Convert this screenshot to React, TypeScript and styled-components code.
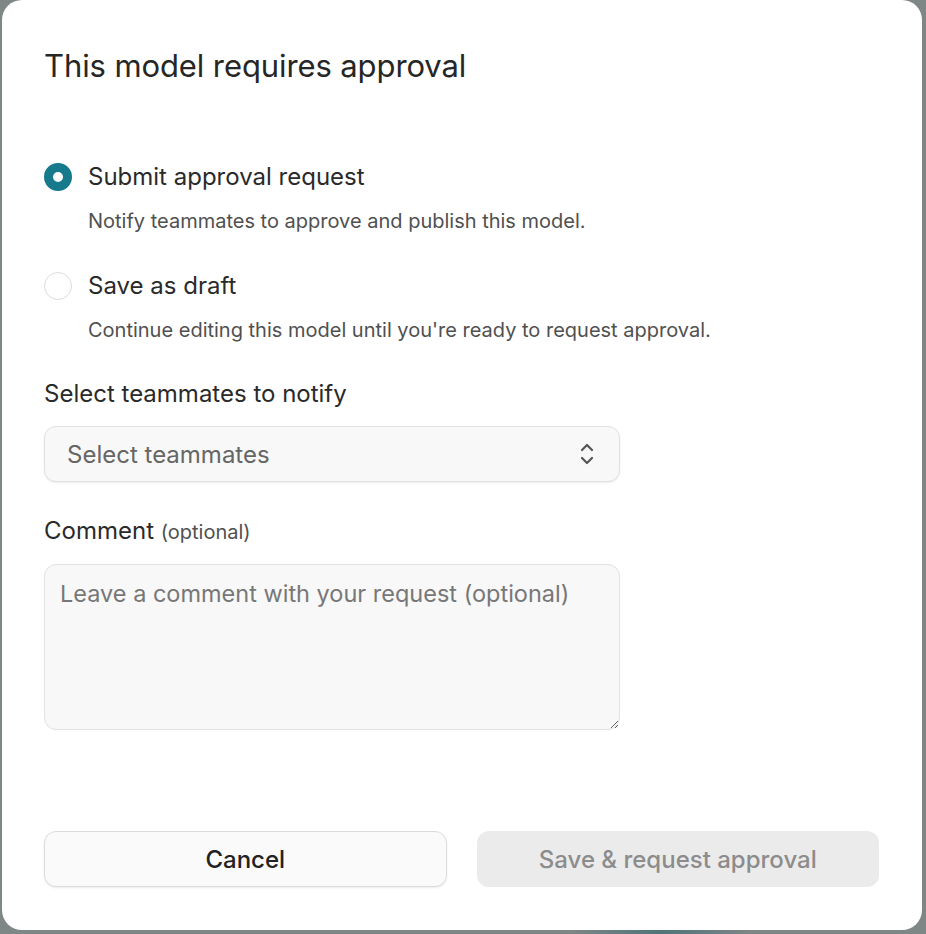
import React, { useState } from 'react';
import styled, { createGlobalStyle } from 'styled-components';

const GlobalStyle = createGlobalStyle`
  html, body {
    margin: 0;
    padding: 0;
    height: 100%;
  }
  body {
    background: radial-gradient(ellipse 90px 30px at 660px 934px, #4f7479 0%, #7f8686 100%), #808080;
    background-color: #808080;
    font-family: Inter, "Noto Sans", "Liberation Sans", sans-serif;
    overflow: hidden;
  }
`;

const Overlay = styled.div`
  width: 926px;
  height: 934px;
  padding-left: 2px;
  box-sizing: border-box;
`;

const Dialog = styled.div`
  width: 920px;
  height: 930px;
  background: #ffffff;
  border-radius: 20px;
  box-sizing: border-box;
  padding: 47px 43px 43px 42px;
  display: flex;
  flex-direction: column;
`;

const Title = styled.h2`
  margin: 0;
  font-size: 31px;
  line-height: 38px;
  font-weight: 400;
  color: #262626;
  letter-spacing: -0.1px;
`;

const Options = styled.div`
  margin-top: 78px;
  display: flex;
  flex-direction: column;
  gap: 38px;
`;

const Option = styled.label`
  display: grid;
  grid-template-columns: 28px 1fr;
  column-gap: 16px;
  row-gap: 17px;
  align-items: center;
  cursor: pointer;
`;

const Radio = styled.span<{ $checked: boolean }>`
  width: 28px;
  height: 28px;
  border-radius: 50%;
  box-sizing: border-box;
  background: #ffffff;
  border: ${(p) => (p.$checked ? '9px solid #16798c' : '1px solid #dcdcdc')};
`;

const OptionLabel = styled.span`
  font-size: 24px;
  line-height: 28px;
  color: #2a2a2a;
`;

const OptionHint = styled.span`
  grid-column: 2;
  font-size: 20px;
  line-height: 26px;
  color: #505050;
`;

const Field = styled.div<{ $top: number }>`
  margin-top: ${(p) => p.$top}px;
  display: flex;
  flex-direction: column;
  gap: 18px;
  width: 576px;
`;

const FieldLabel = styled.div`
  font-size: 24px;
  line-height: 28px;
  color: #2a2a2a;
`;

const Optional = styled.span`
  font-size: 20px;
  color: #505050;
`;

const SelectBox = styled.button`
  height: 56px;
  box-sizing: border-box;
  border: 1px solid #e2e2e2;
  border-radius: 12px;
  background: #f8f8f8;
  box-shadow: 0 1px 2px rgba(0, 0, 0, 0.08);
  display: flex;
  align-items: center;
  justify-content: space-between;
  padding: 0 24px 0 22px;
  font-family: inherit;
  font-size: 24px;
  color: #666666;
  cursor: pointer;
`;

const TextArea = styled.textarea`
  height: 166px;
  box-sizing: border-box;
  border: 1px solid #e2e2e2;
  border-radius: 12px;
  background: #f8f8f8;
  padding: 14px 15px;
  font-family: inherit;
  font-size: 23.5px;
  line-height: 30px;
  color: #333;
  resize: vertical;
  outline: none;
  &::placeholder {
    color: #777777;
  }
`;

const Footer = styled.div`
  margin-top: auto;
  display: grid;
  grid-template-columns: 1fr 1fr;
  gap: 30px;
`;

const Button = styled.button<{ $primary?: boolean }>`
  height: 56px;
  border-radius: 12px;
  font-family: inherit;
  font-size: 24px;
  font-weight: 500;
  cursor: ${(p) => (p.$primary ? 'default' : 'pointer')};
  border: ${(p) => (p.$primary ? 'none' : '1px solid #dcdcdc')};
  background: ${(p) => (p.$primary ? '#ebebeb' : '#fafafa')};
  color: ${(p) => (p.$primary ? '#8c8c8c' : '#222222')};
  box-shadow: ${(p) => (p.$primary ? 'none' : '0 1px 2px rgba(0, 0, 0, 0.08)')};
`;

const Chevrons = () => (
  <svg width="16" height="26" viewBox="0 0 16 26" fill="none" stroke="#555" strokeWidth="2.2" strokeLinecap="round" strokeLinejoin="round">
    <path d="M3 9l5-5 5 5" />
    <path d="M3 17l5 5 5-5" />
  </svg>
);

const options = [
  { id: 'submit', label: 'Submit approval request', hint: 'Notify teammates to approve and publish this model.' },
  { id: 'draft', label: 'Save as draft', hint: "Continue editing this model until you're ready to request approval." },
];

export default function App() {
  const [choice, setChoice] = useState('submit');

  return (
    <>
      <GlobalStyle />
      <Overlay>
        <Dialog>
          <Title>This model requires approval</Title>
          <Options>
            {options.map((o) => (
              <Option key={o.id} onClick={() => setChoice(o.id)}>
                <Radio $checked={choice === o.id} />
                <OptionLabel>{o.label}</OptionLabel>
                <OptionHint>{o.hint}</OptionHint>
              </Option>
            ))}
          </Options>
          <Field $top={37}>
            <FieldLabel>Select teammates to notify</FieldLabel>
            <SelectBox type="button">
              <span>Select teammates</span>
              <Chevrons />
            </SelectBox>
          </Field>
          <Field $top={35}>
            <FieldLabel>
              Comment <Optional>(optional)</Optional>
            </FieldLabel>
            <TextArea placeholder="Leave a comment with your request (optional)" />
          </Field>
          <Footer>
            <Button type="button">Cancel</Button>
            <Button type="button" $primary>
              Save &amp; request approval
            </Button>
          </Footer>
        </Dialog>
      </Overlay>
    </>
  );
}
